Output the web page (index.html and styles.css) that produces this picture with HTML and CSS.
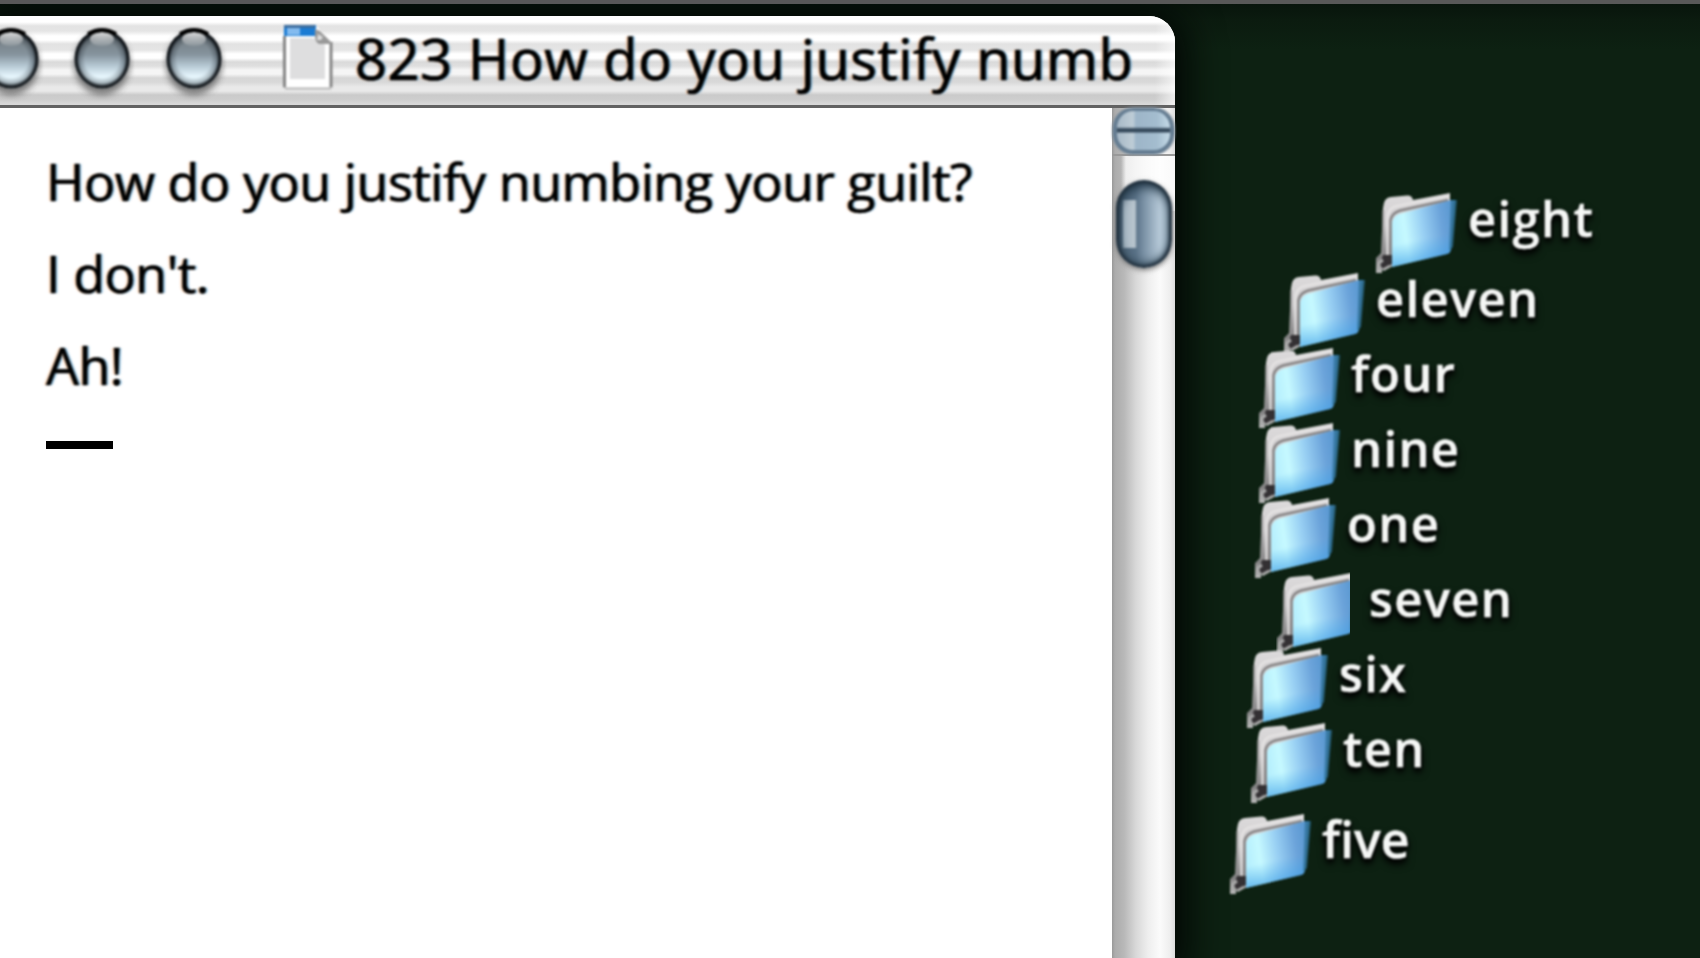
FILE: index.html
```html
<!DOCTYPE html>
<html lang="en">
<head>
<meta charset="utf-8">
<title>Desktop</title>
<link rel="stylesheet" href="styles.css">
</head>
<body>
<svg class="defs" width="0" height="0" aria-hidden="true">
  <defs>
    <linearGradient id="front" x1="0" y1=".55" x2="1" y2=".4">
      <stop offset="0" stop-color="#b4eefd"/><stop offset=".22" stop-color="#c6f9ff"/><stop offset=".5" stop-color="#98cff3"/><stop offset=".8" stop-color="#6ba3da"/><stop offset="1" stop-color="#5897d0"/>
    </linearGradient>
    <linearGradient id="shade" x1="0" y1="0" x2=".2" y2="1">
      <stop offset=".65" stop-color="#48a9ec" stop-opacity="0"/><stop offset="1" stop-color="#409fe6" stop-opacity=".7"/>
    </linearGradient>
    <linearGradient id="back" x1="0" y1="0" x2="0" y2="1">
      <stop offset="0" stop-color="#dedcdd"/><stop offset=".4" stop-color="#cfcdce"/><stop offset=".8" stop-color="#838283"/><stop offset="1" stop-color="#bbb"/>
    </linearGradient>
    <linearGradient id="orb" x1="0" y1="0" x2="0" y2="1">
      <stop offset="0" stop-color="#555b5f"/><stop offset=".25" stop-color="#7b868d"/><stop offset=".42" stop-color="#85939d"/><stop offset=".62" stop-color="#b7c9d4"/><stop offset=".8" stop-color="#e8f8ff"/><stop offset="1" stop-color="#e0f0f6"/>
    </linearGradient>
    <radialGradient id="rim" cx=".5" cy=".5" r=".5">
      <stop offset=".62" stop-color="#101820" stop-opacity="0"/><stop offset=".82" stop-color="#101820" stop-opacity=".3"/><stop offset=".92" stop-color="#080c10" stop-opacity=".9"/><stop offset="1" stop-color="#080c10"/>
    </radialGradient>
    <linearGradient id="gloss" x1="0" y1="0" x2="0" y2="1">
      <stop offset="0" stop-color="#fff" stop-opacity=".85"/><stop offset="1" stop-color="#fff" stop-opacity=".1"/>
    </linearGradient>
    <symbol id="orb-button" viewBox="0 0 64 74">
      <ellipse class="orb-shadow" cx="32" cy="38" rx="28" ry="31"/>
      <ellipse cx="32" cy="33" rx="27.5" ry="29.5" fill="url(#orb)"/>
      <ellipse cx="32" cy="33" rx="27.5" ry="29.5" fill="url(#rim)"/>
      <ellipse cx="32" cy="13" rx="12" ry="7" fill="url(#gloss)"/>
      <path d="M18 8Q32 0 46 8" fill="none" stroke="#000" stroke-width="4"/>
    </symbol>
    <symbol id="folder" viewBox="0 0 84 84">
      <path d="M8 16Q9 5 16 5L32 3.500Q37 3 38 8L75 1V12L24 24L19 74L7 78V81H1V66L6 61Z" fill="url(#back)"/>
      <path d="M12.500 66V25Q13 16 22 14L36 11L74 4" fill="none" stroke="#e6e4e4" stroke-width="2"/>
      <path d="M8 62V18" stroke="#8b8a8b" stroke-width="1.500"/>
      <path d="M15.500 68V28Q17 21 25 18.500L73 8" fill="none" stroke="#858384" stroke-width="2.500"/>
      <path d="M17 32Q17 25 24 22L76 8H80L76 58Q75 61 72 62L17 75Z" fill="url(#front)"/>
      <path d="M17 32Q17 25 24 22L76 8H80L76 58Q75 61 72 62L17 75Z" fill="url(#shade)"/>
      <path d="M76 8H82L78 55L74 59Z" fill="#2d6f94" opacity=".75"/>
      <path d="M8 63H17V72L8 77L5 73Z" fill="#333033"/>
      <path d="M4 78V71L8 68M8 78L15 74" stroke="#aaa" stroke-width="3" fill="none"/>
    </symbol>
  </defs>
</svg>
<div class="desktop">
  <div class="menubar-edge"></div>
  <main class="window">
    <header class="titlebar">
      <div class="controls">
        <svg class="control"><use href="#orb-button"/></svg>
        <svg class="control"><use href="#orb-button"/></svg>
        <svg class="control"><use href="#orb-button"/></svg>
      </div>
      <svg class="document" viewBox="0 0 50 66">
        <path d="M1 1H32L49 18V64H1Z" fill="#fff"/>
        <path d="M7 14H30L42 21V55H7Z" fill="#dededf"/>
        <path d="M1.500 12V63.500M48 18V63.500" stroke="#858585" stroke-width="3"/>
        <path d="M2 64.500H48" stroke="#b5b5b5" stroke-width="2"/>
        <path d="M1 1H33V12H1Z" fill="#1a7bd3"/>
        <path d="M1 1H32V4H1Z" fill="#3c6d9f"/>
        <path d="M4 4H17V11H4Z" fill="#83bbef"/>
        <path d="M32 5L37 7L48 18V20H36Q32 18 32 12Z" fill="#999"/>
        <path d="M35 10L40 13L38 16H34Z" fill="#ddd"/>
      </svg>
      <h1 class="title">823 How do you justify numb</h1>
    </header>
    <div class="body">
      <article class="text">
        <p class="line">How do you justify numbing your guilt?</p>
        <p class="line">I don't.</p>
        <p class="line">Ah!</p>
        <div class="caret"></div>
      </article>
      <aside class="scrollbar">
        <div class="splitter"></div>
        <div class="track"><div class="thumb"></div></div>
      </aside>
    </div>
  </main>
  <div class="item eight"><svg class="folder"><use href="#folder"/></svg><span class="label">eight</span></div>
  <div class="item eleven"><svg class="folder"><use href="#folder"/></svg><span class="label">eleven</span></div>
  <div class="item four"><svg class="folder"><use href="#folder"/></svg><span class="label">four</span></div>
  <div class="item nine"><svg class="folder"><use href="#folder"/></svg><span class="label">nine</span></div>
  <div class="item one"><svg class="folder"><use href="#folder"/></svg><span class="label">one</span></div>
  <div class="item seven"><svg class="folder"><use href="#folder"/></svg><span class="label">seven</span></div>
  <div class="item six"><svg class="folder"><use href="#folder"/></svg><span class="label">six</span></div>
  <div class="item ten"><svg class="folder"><use href="#folder"/></svg><span class="label">ten</span></div>
  <div class="item five"><svg class="folder"><use href="#folder"/></svg><span class="label">five</span></div>
</div>
</body>
</html>
```

FILE: styles.css
```css
* { box-sizing: border-box; }
body { margin: 0; overflow: hidden; font-family: "Open Sans", "Noto Sans", sans-serif; }
.defs { position: absolute; }
.desktop { position: relative; width: 1700px; height: 958px; overflow: hidden; background: linear-gradient(#07130b 0, #0b1b0f 20px, #0d2112 50px); }
.menubar-edge { height: 4px; background: #585858; }

.window { width: 1175px; height: 942px; margin-top: 12px; display: flex; flex-direction: column; border-top-right-radius: 26px; background: #fff; box-shadow: 0 6px 36px 12px #020604; clip-path: inset(-12px -80px 0 0); }
.titlebar { flex: none; height: 92px; display: flex; overflow: hidden; border-bottom: 3px solid #626262; border-top-right-radius: 26px;
  background: linear-gradient(90deg, transparent 1155px, rgba(255,255,255,.6) 1173px),
    linear-gradient(#fff 0, #fff 6px, #e3e3e3 10px, #e5e5e5 15px, #fff 20px, #fff 24px, #e2e2e2 28px, #e5e5e5 34px, #fff 38px, #fff 42px, #dadada 46px, #dfdfdf 50px, #f5f5f5 54px, #f5f5f5 58px, #d6d6d6 62px, #d8d8d8 66px, #e9e9e9 71px, #e9e9e9 75px, #cacaca 79px, #cecece 84px, #d8d8d8 88px); }
.controls { flex: none; display: flex; gap: 27.500px; margin-left: -21.500px; padding-top: 9.500px; }
.control { width: 64px; height: 74px; filter: blur(1px); }
.orb-shadow { fill: #555; filter: blur(3px); opacity: .75; }
.document { flex: none; width: 50px; height: 66px; margin: 8px 0 0 57.500px; filter: blur(.9px); }
.title { margin: 0 0 0 22px; padding-top: 4px; font-size: 56px; line-height: 76px; font-weight: 500; white-space: nowrap; letter-spacing: .6px; -webkit-text-stroke: .7px #000; filter: blur(.8px); text-shadow: -2px 0 1px rgba(240,150,80,.5), 2px 0 1px rgba(40,130,190,.6); }

.body { flex: 1; display: flex; min-height: 0; }
.text { width: 1112px; padding: 35px 0 0 46px; }
.line { margin: 0; height: 92px; font-size: 52px; line-height: 76px; font-weight: 500; white-space: nowrap; letter-spacing: -.45px; -webkit-text-stroke: .5px #000; filter: blur(.8px); text-shadow: -2px 0 1px rgba(240,150,80,.45), 2px 0 1px rgba(40,130,190,.55); }
.caret { width: 67px; height: 8px; margin-top: 22px; background: #000; }

.scrollbar { width: 63px; display: flex; flex-direction: column; background: linear-gradient(90deg, #999 0, #acacac 3px, #b8b8b8 12px, #d8d8d8 24px, #eee 36px, #fbfbfb 48px, #eee 58px, #ddd 63px); }
.splitter { flex: none; width: 61px; height: 46px; margin-left: 1px; border: 4px solid #647c91; border-width: 3px 4px 4px; border-radius: 20px; box-shadow: 0 0 0 1px #8e9aa4; filter: blur(.9px);
  background: linear-gradient(transparent 16px, #34485a 18px, #34485a 21px, transparent 22px), linear-gradient(90deg, #a7b9c7, #bfcdd7 16px, #9db5c8 19px, #a4bdcf 40px, #c5dae7); }
.track { flex: 1; padding: 24px 3px 0 4px; border-top: 2px solid #999; background: linear-gradient(90deg, rgba(255,255,255,0) 0, rgba(255,255,255,0) 9px, rgba(255,255,255,.75) 14px) 0 0 / 100% 55px no-repeat; }
.thumb { width: 56px; height: 88px; border-radius: 28px; filter: blur(.9px);
  background: linear-gradient(90deg, transparent 6px, #a8b8c4 8px, #bac6cf 19px, transparent 21px) 0 20px / 100% 48px no-repeat, linear-gradient(90deg, #445a6c, #5b7388 20px, #7b92a6 28px, #b7cad9 44px, #9bafbe);
  box-shadow: inset 0 0 3px 3px #23323f, inset 0 7px 11px #1f3444, inset 0 -5px 10px #3c5262, 0 2px 5px #777; }

.item { position: absolute; display: flex; height: 84px; }
.folder { flex: none; width: 84px; height: 84px; filter: blur(1px); }
.label { margin-left: 9px; font-size: 49px; line-height: 53px; font-weight: 600; letter-spacing: 1.300px; -webkit-text-stroke: .5px #f5f7f5; color: #f5f7f5; white-space: nowrap; filter: blur(.8px); text-shadow: 0 4px 5px #000, 0 5px 8px #000, 1px 1px 2px #000; }
.eight { left: 1375px; top: 192px; }
.eleven { left: 1283px; top: 272px; }
.four { left: 1258px; top: 347px; }
.nine { left: 1258px; top: 422px; }
.one { left: 1254px; top: 497px; }
.seven { left: 1276px; top: 572px; }
.seven .folder { clip-path: inset(0 10px 0 0); }
.six { left: 1246px; top: 647px; }
.ten { left: 1250px; top: 722px; }
.five { left: 1229px; top: 813px; }
.five .label { letter-spacing: 0; font-size: 50px; }
```
